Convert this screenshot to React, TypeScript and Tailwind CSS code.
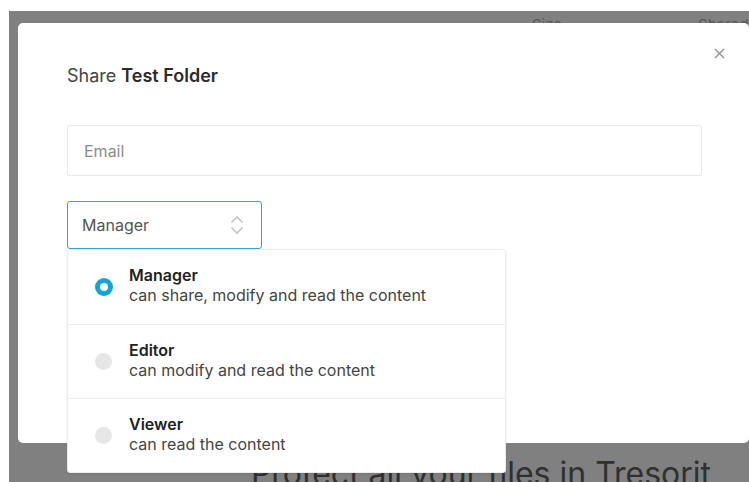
import React from "react";

type Role = { name: string; desc: string; selected?: boolean };

const roles: Role[] = [
  { name: "Manager", desc: "can share, modify and read the content", selected: true },
  { name: "Editor", desc: "can modify and read the content" },
  { name: "Viewer", desc: "can read the content" },
];

function CloseIcon() {
  return (
    <svg width="11" height="11" viewBox="0 0 11 11" fill="none">
      <path d="M1 1L10 10M10 1L1 10" stroke="#8f8f8f" strokeWidth="1.4" />
    </svg>
  );
}

function UpDownIcon() {
  return (
    <svg width="14" height="20" viewBox="0 0 14 20" fill="none">
      <path d="M1.5 7.5L7 2L12.5 7.5" stroke="#c4c4c4" strokeWidth="1.6" />
      <path d="M1.5 12.5L7 18L12.5 12.5" stroke="#c4c4c4" strokeWidth="1.6" />
    </svg>
  );
}

function Radio({ on }: { on?: boolean }) {
  if (on) {
    return (
      <span className="flex h-[18px] w-[18px] items-center justify-center rounded-full bg-[#0ea5d8]">
        <span className="h-[8px] w-[8px] rounded-full bg-white" />
      </span>
    );
  }
  return <span className="block h-[17px] w-[17px] rounded-full bg-[#e6e6e6]" />;
}

export default function App() {
  return (
    <div
      className="relative h-[482px] w-[749px] overflow-hidden bg-white"
      style={{ fontFamily: "Inter, 'Noto Sans', sans-serif" }}
    >
      {/* dimmed page behind the dialog */}
      <div className="h-full pl-[9px] pt-[11px]">
        <div className="flex h-full flex-col bg-[#808080]">
          <div className="flex h-[24px] items-end text-[15px] leading-[20px] text-[#585858]">
            <span className="ml-[523px]">Size</span>
            <span className="ml-[136px]">Shared</span>
          </div>
          <div className="mt-auto flex justify-end pr-[38px]">
            <h1 className="translate-y-[8px] text-[32px] font-normal leading-[32px] text-[#303030]">
              Protect all your files in Tresorit
            </h1>
          </div>
        </div>
      </div>

      {/* share dialog */}
      <div className="absolute left-[18px] top-[23px] h-[420px] w-[731px] rounded-[5px] bg-white">
        <div className="flex justify-end pr-[24px] pt-[25px]">
          <CloseIcon />
        </div>
        <div className="pl-[49px] pr-[47px]">
          <h2 className="mt-[5px] text-[18px] leading-[24px] text-[#444]">
            Share <span className="font-semibold text-[#2b2b2b]">Test Folder</span>
          </h2>
          <div className="mt-[37px] flex h-[51px] items-center rounded-[2px] border border-[#e8e8e8] pl-[16px] text-[16px] text-[#8c8c8c]">
            Email
          </div>
          <div className="relative mt-[25px] w-[195px]">
            <div className="flex h-[48px] items-center justify-between rounded-[3px] border border-[#2aa8d6] pl-[14px] pr-[17px] text-[16px] text-[#555]">
              <span>Manager</span>
              <UpDownIcon />
            </div>
            {/* role menu */}
            <div className="absolute left-0 top-[48px] z-10 w-[439px] rounded-[3px] border border-[#ececec] bg-white shadow-[0_1px_3px_rgba(0,0,0,0.08)]">
              {roles.map((r, i) => (
                <div
                  key={r.name}
                  className={`flex h-[74px] items-center ${i > 0 ? "border-t border-[#ececec]" : ""}`}
                >
                  <div className="flex w-[61px] justify-center pl-[10px]">
                    <Radio on={r.selected} />
                  </div>
                  <div className="flex flex-col pb-[4px]">
                    <span className="text-[16px] font-semibold leading-[20px] text-[#222]">
                      {r.name}
                    </span>
                    <span className="text-[16px] leading-[20px] text-[#444]">{r.desc}</span>
                  </div>
                </div>
              ))}
            </div>
          </div>
        </div>
      </div>
    </div>
  );
}
